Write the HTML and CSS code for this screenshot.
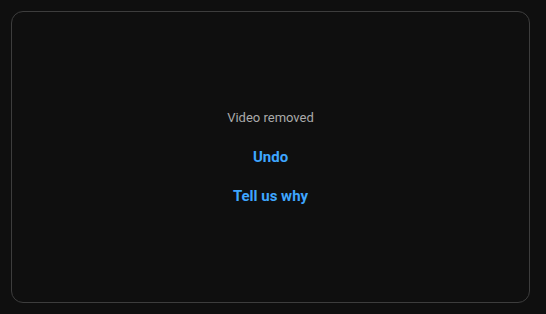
FILE: index.html
```html
<!DOCTYPE html>
<html>
<head>
<meta charset="utf-8">
<link rel="stylesheet" href="styles.css">
</head>
<body>
<div class="card">
  <div class="msg">Video removed</div>
  <button class="action">Undo</button>
  <button class="action">Tell us why</button>
</div>
</body>
</html>
```
FILE: styles.css
```css
html, body {
  margin: 0;
  padding: 0;
  background: #0f0f0f;
}
body {
  padding: 11px 16px 11px 11px;
  font-family: Roboto, "Liberation Sans", sans-serif;
}
.card {
  box-sizing: border-box;
  width: 519px;
  height: 292px;
  border: 1px solid #3d3d3d;
  border-radius: 12px;
  display: flex;
  flex-direction: column;
  align-items: center;
  justify-content: center;
  gap: 19px;
}
.msg {
  color: #aaaaaa;
  font-size: 13px;
  line-height: 20px;
}
.action {
  background: none;
  border: none;
  padding: 0;
  color: #3ea6ff;
  font-family: inherit;
  font-size: 15px;
  font-weight: 700;
  line-height: 20px;
}
```
